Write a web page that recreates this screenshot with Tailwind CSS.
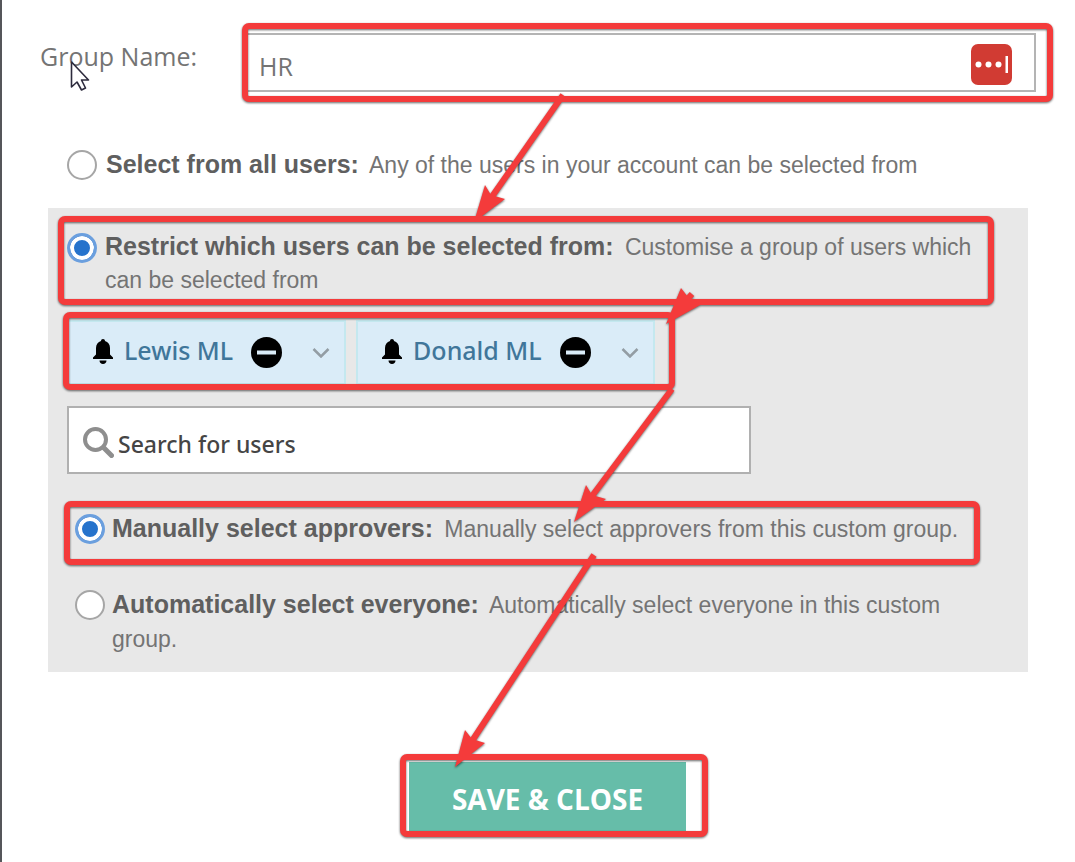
<!DOCTYPE html>
<html lang="en">
<head>
<meta charset="utf-8">
<meta name="viewport" content="width=device-width, initial-scale=1">
<title>Edit group</title>
<script src="https://cdn.jsdelivr.net/npm/@tailwindcss/browser@4"></script>
</head>
<body class="bg-white">
<main class="relative min-h-screen border-l-2 border-[#55565a] pt-[33px] pb-6 font-['Liberation_Sans',Arial,sans-serif] text-[23px] leading-[34px] text-[#747474]">
  <form>
    <div class="flex items-start pr-[39px] pl-[38px] font-['Open_Sans',sans-serif]">
      <label for="group-name" class="w-[206px] shrink-0 text-[25px] leading-[46px]">Group Name:</label>
      <div class="flex h-[59px] flex-1 items-center border-2 border-[#b4b4b4] pr-[22px] pl-[11px]">
        <input id="group-name" type="text" value="HR" class="min-w-0 flex-1 bg-transparent pt-[6px] text-[25px] outline-none">
        <button type="button" aria-label="Fill from password manager" class="mt-1 size-[41px]">
          <svg viewBox="0 0 41 41" class="size-full"><rect width="41" height="41" rx="7" fill="#d13b33"/><g fill="#fff"><circle cx="7.500" cy="20.500" r="3"/><circle cx="17.500" cy="20.500" r="3"/><circle cx="27.500" cy="20.500" r="3"/><rect x="34.500" y="12" width="2.500" height="17"/></g></svg>
        </button>
      </div>
    </div>

    <div class="mt-14 flex items-start gap-[9px] pr-12 pl-[65px]">
      <input id="all-users" type="radio" name="scope" class="mt-[2px] size-[30px] shrink-0 appearance-none rounded-full border-2 border-[#a6a6a6] bg-white checked:border-[3px] checked:border-[#6b9fde] checked:bg-[#2673cc] checked:shadow-[inset_0_0_0_4px_white]">
      <label for="all-users"><b class="mr-[5px] text-[25px] leading-none text-[#5f5f5f]">Select from all users:</b> Any of the users in your account can be selected from</label>
    </div>

    <section class="mt-[26px] mr-[47px] ml-[46px] bg-[#e8e8e8] pt-[23px] pb-4">
      <div class="flex items-start gap-2 pr-10 pl-[19px] leading-[33px]">
        <input id="restrict" type="radio" name="scope" checked class="mt-[2px] size-[30px] shrink-0 appearance-none rounded-full border-2 border-[#a6a6a6] bg-white checked:border-[3px] checked:border-[#6b9fde] checked:bg-[#2673cc] checked:shadow-[inset_0_0_0_4px_white]">
        <label for="restrict"><b class="mr-[5px] text-[25px] leading-none text-[#5f5f5f]">Restrict which users can be selected from:</b> Customise a group of users which can be selected from</label>
      </div>

      <ul class="mt-[23px] flex gap-[10px] pl-[19px] font-['Noto_Sans',sans-serif] text-[25px] font-medium text-[#40769a]">
        <li class="flex h-[65px] items-center border-2 border-[#c4e8ef] bg-[#daecf8] pr-[14px] pb-[2px] pl-6">
          <svg viewBox="0 0 20 25" class="mr-[11px] h-[25px] w-5 text-black" fill="currentColor" aria-hidden="true"><path d="M10 0c1.200 0 2 .8 2 2 3 .9 5 3.600 5 7v6.500l3 3V20H0v-1.500l3-3V9c0-3.400 2-6.100 5-7 0-1.200.8-2 2-2zM6.500 21.500h7c0 2-1.500 3.500-3.500 3.500s-3.500-1.500-3.500-3.500z"/></svg>
          <span class="mb-1">Lewis ML</span>
          <button type="button" aria-label="Remove Lewis ML" class="mt-[2px] ml-[18px] size-[31px]"><svg viewBox="0 0 31 31" class="size-full"><circle cx="15.500" cy="15.500" r="15.500" fill="#000"/><rect x="6" y="13.500" width="19" height="4" fill="#daecf8"/></svg></button>
          <button type="button" aria-label="Options for Lewis ML" class="mt-[2px] ml-[30px] h-[10px] w-[18px]"><svg viewBox="0 0 18 10" class="size-full" fill="none" stroke="#939da4" stroke-width="2.500"><path d="M1.500 1 9 8.500 16.500 1"/></svg></button>
        </li>
        <li class="flex h-[65px] items-center border-2 border-[#c4e8ef] bg-[#daecf8] pr-[14px] pb-[2px] pl-6">
          <svg viewBox="0 0 20 25" class="mr-[11px] h-[25px] w-5 text-black" fill="currentColor" aria-hidden="true"><path d="M10 0c1.200 0 2 .8 2 2 3 .9 5 3.600 5 7v6.500l3 3V20H0v-1.500l3-3V9c0-3.400 2-6.100 5-7 0-1.200.8-2 2-2zM6.500 21.500h7c0 2-1.500 3.500-3.500 3.500s-3.500-1.500-3.500-3.500z"/></svg>
          <span class="mb-1">Donald ML</span>
          <button type="button" aria-label="Remove Donald ML" class="mt-[2px] ml-[18px] size-[31px]"><svg viewBox="0 0 31 31" class="size-full"><circle cx="15.500" cy="15.500" r="15.500" fill="#000"/><rect x="6" y="13.500" width="19" height="4" fill="#daecf8"/></svg></button>
          <button type="button" aria-label="Options for Donald ML" class="mt-[2px] ml-[30px] h-[10px] w-[18px]"><svg viewBox="0 0 18 10" class="size-full" fill="none" stroke="#939da4" stroke-width="2.500"><path d="M1.500 1 9 8.500 16.500 1"/></svg></button>
        </li>
      </ul>

      <div class="mt-[21px] ml-[19px] flex h-[68px] max-w-[684px] items-center border-2 border-[#b0b0b0] bg-white pl-[14px]">
        <svg viewBox="0 0 31 31" class="mt-1 size-[31px] shrink-0" fill="none" stroke="#8e8e8e" aria-hidden="true"><circle cx="12.500" cy="12.500" r="10.500" stroke-width="4"/><path d="m20.500 20.500 8 8" stroke-width="5" stroke-linecap="round"/></svg>
        <input type="text" aria-label="Search for users" placeholder="Search for users" class="min-w-0 flex-1 bg-transparent pt-2 pl-1 font-['Noto_Sans',sans-serif] text-[23px] font-medium outline-none placeholder:text-[#454545]">
      </div>

      <div class="mt-[38px] flex items-start gap-[7px] pr-10 pl-[27px]">
        <input id="manual" type="radio" name="approvers" checked class="mt-[2px] size-[30px] shrink-0 appearance-none rounded-full border-2 border-[#a6a6a6] bg-white checked:border-[3px] checked:border-[#6b9fde] checked:bg-[#2673cc] checked:shadow-[inset_0_0_0_4px_white]">
        <label for="manual"><b class="mr-[5px] text-[25px] leading-none text-[#5f5f5f]">Manually select approvers:</b> Manually select approvers from this custom group.</label>
      </div>
      <div class="mt-[42px] flex items-start gap-[7px] pr-10 pl-[27px]">
        <input id="automatic" type="radio" name="approvers" class="mt-[2px] size-[30px] shrink-0 appearance-none rounded-full border-2 border-[#a6a6a6] bg-white checked:border-[3px] checked:border-[#6b9fde] checked:bg-[#2673cc] checked:shadow-[inset_0_0_0_4px_white]">
        <label for="automatic"><b class="mr-[5px] text-[25px] leading-none text-[#5f5f5f]">Automatically select everyone:</b> Automatically select everyone in this custom group.</label>
      </div>
    </section>

    <div class="mt-[90px] flex justify-center pl-[18px]">
      <button type="submit" class="h-[69px] bg-[#66bda9] px-[43px] pt-1 font-['Open_Sans',sans-serif] text-[28px] font-bold text-white">SAVE &amp; CLOSE</button>
    </div>
  </form>

  <!-- Walkthrough highlights, arrows and pointer drawn over the form -->
  <svg class="pointer-events-none absolute top-0 -left-[2px] h-[862px] w-[1075px] drop-shadow-[0_1px_1px_rgb(0_0_0/0.6)]" viewBox="0 0 1075 862" fill="none" stroke="#f43b3b" stroke-width="6" aria-hidden="true">
    <rect x="245" y="26" width="805" height="73" rx="4"/>
    <rect x="61" y="219" width="930" height="83" rx="4"/>
    <rect x="66" y="315" width="606" height="72" rx="4"/>
    <rect x="67" y="504" width="910" height="58" rx="4"/>
    <rect x="403" y="757" width="302" height="77" rx="4"/>
    <path d="M563 95 491 198M692 294l-9 10M672 389l-80 107M594 555 472 741"/>
    <g fill="#f43b3b" stroke="none">
      <path d="m474 222 11-37 6 10 14 4z"/>
      <path d="m666 324 15-36 7 9 14 7z"/>
      <path d="m574 522 12-37 6 10 14 4z"/>
      <path d="m455 767 10-37 7 9 13 4z"/>
    </g>
  </svg>
  <svg class="pointer-events-none absolute top-[60px] left-[68px] h-8 w-5" viewBox="0 0 20 32" aria-hidden="true"><path d="M1.500 2v25l5.500-5 4.500 8 4-2-4-8h7z" fill="#fff" stroke="#2d2b3d" stroke-width="1.600" stroke-linejoin="round"/></svg>
</main>
</body>
</html>
